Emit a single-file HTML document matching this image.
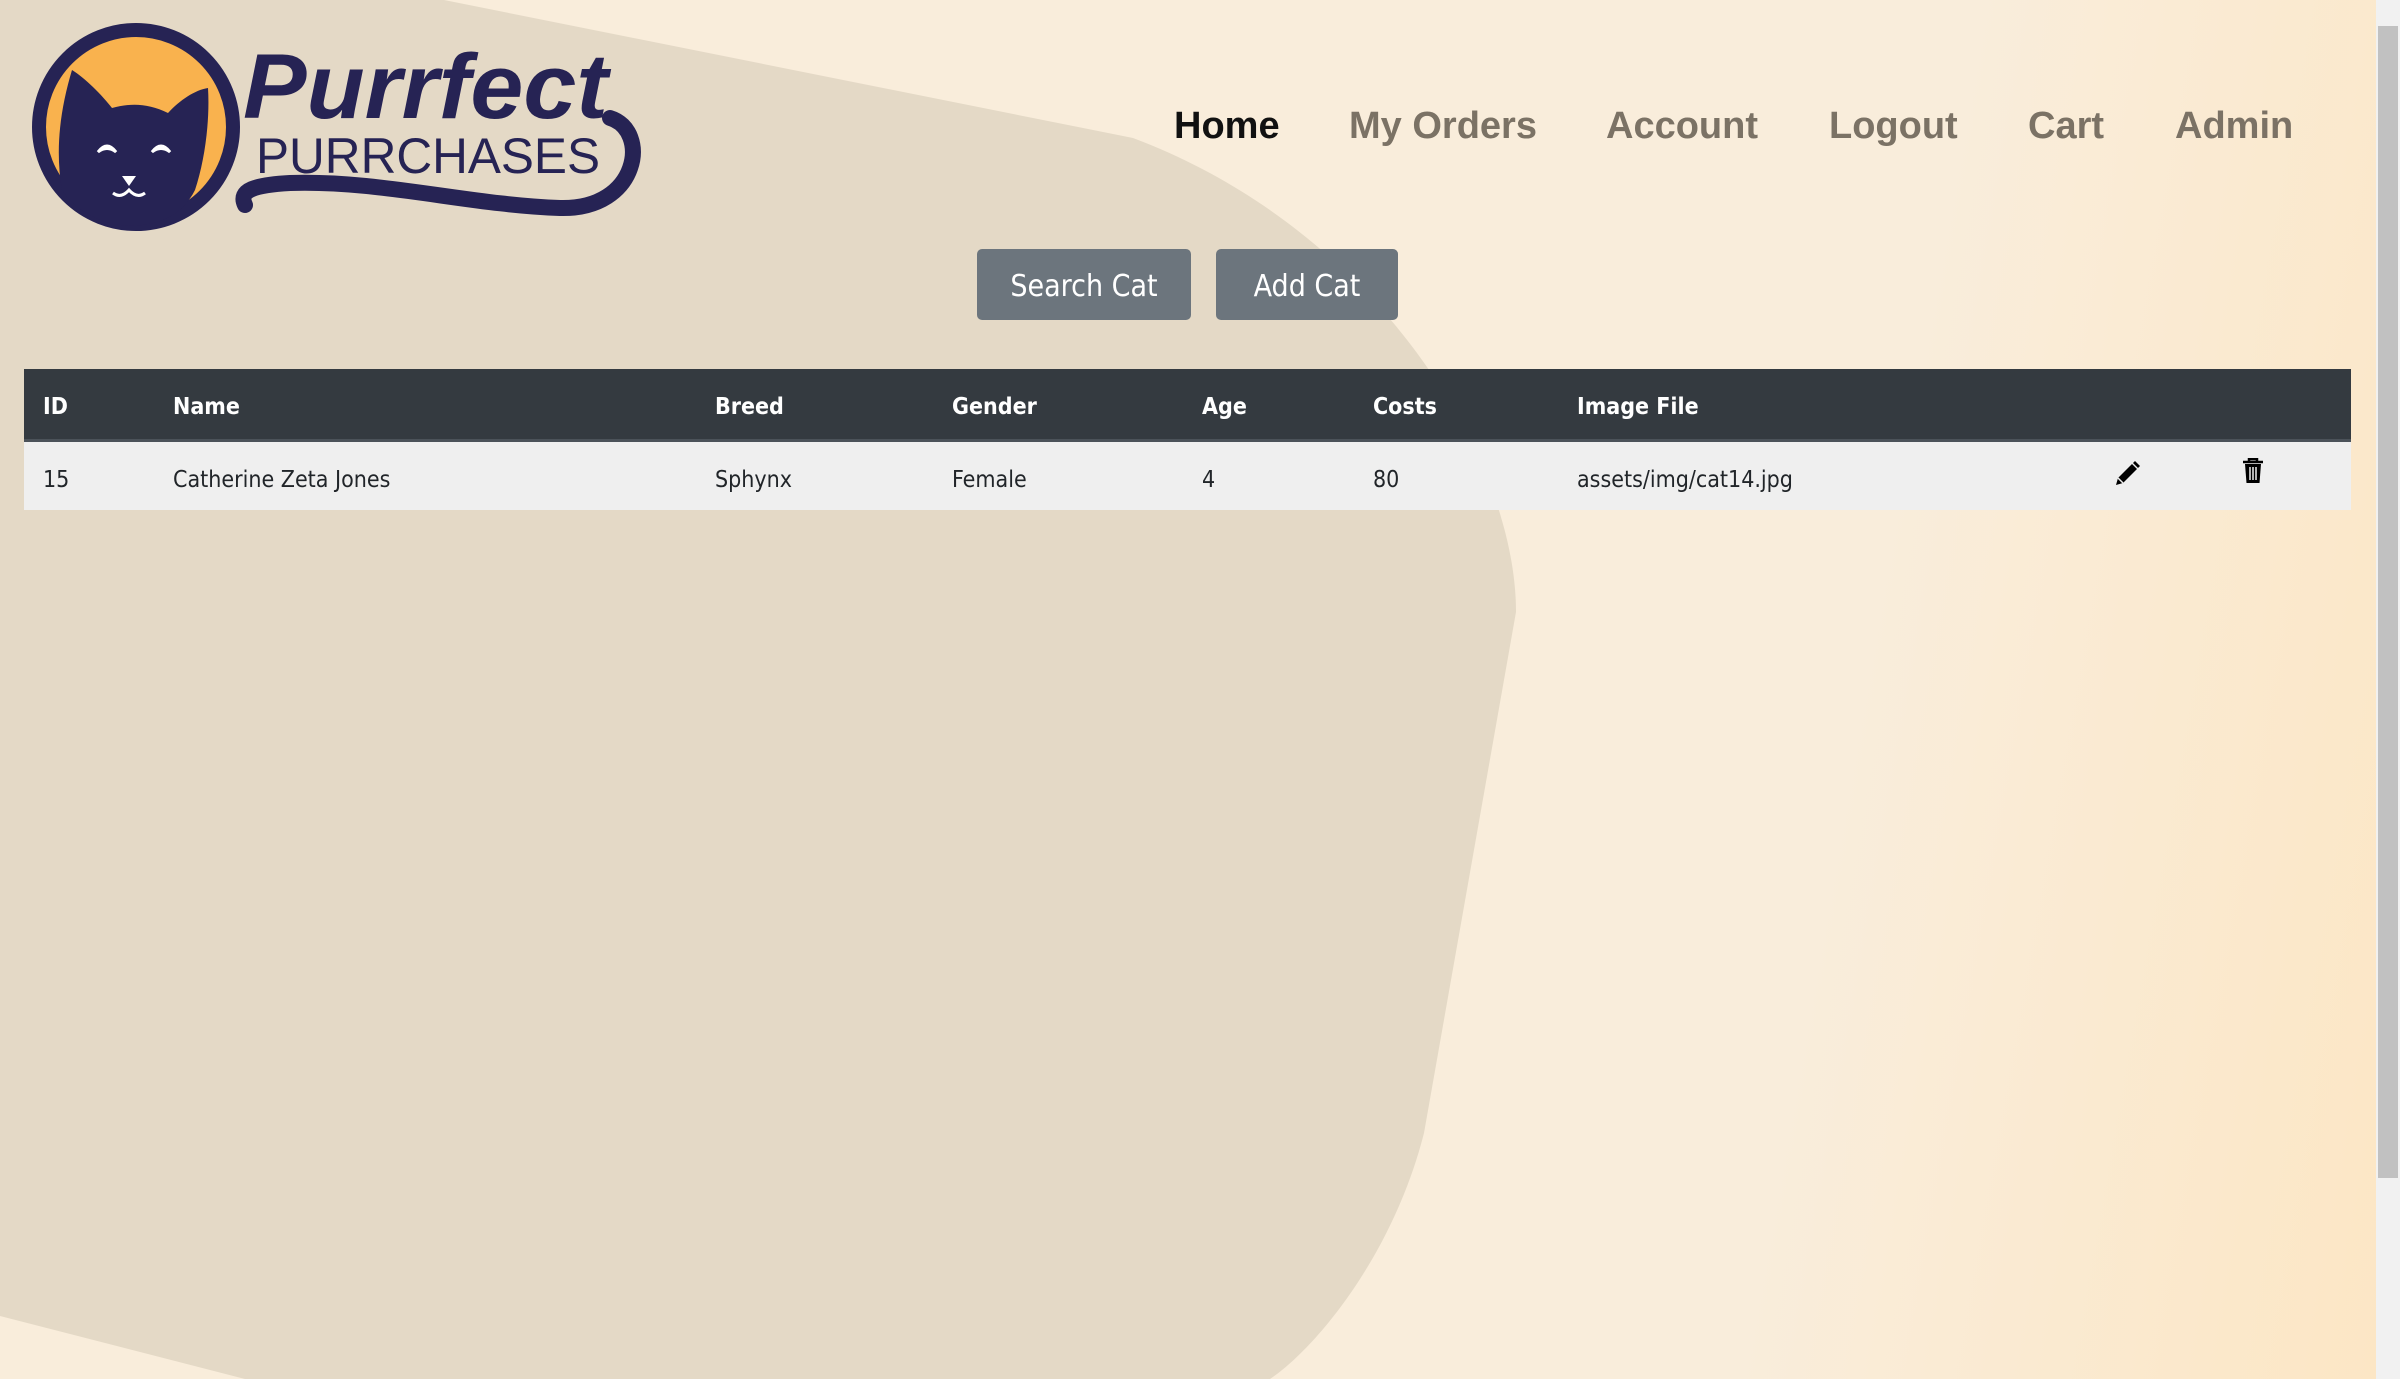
<!DOCTYPE html>
<html><head><meta charset="utf-8"><style>
html,body{margin:0;padding:0}
body{width:2400px;height:1379px;overflow:hidden;position:relative;background:linear-gradient(100deg,#f9eddb 0%,#f9eddb 75%,#fce6c4 100%);font-family:"Liberation Sans",sans-serif}
.bg{position:absolute;left:0;top:0}
.nav{position:absolute;top:105px;font:bold 38px "Liberation Sans",sans-serif;color:#7b7265}
.btn{position:absolute;top:249px;height:71px;background:#6c757d;color:#fff;border-radius:5px;font:30px "DejaVu Sans Condensed","Liberation Sans",sans-serif;line-height:75px;text-align:center}
.tbl{position:absolute;left:24px;top:369px;width:2327px}
.hd{height:70px;background:#343a40;border-bottom:3px solid #4b5259;position:relative;color:#fff;font:bold 23px "DejaVu Sans Condensed","Liberation Sans",sans-serif}
.rw{height:68px;background:#efefef;position:relative;color:#212529;font:23px "DejaVu Sans Condensed","Liberation Sans",sans-serif}
.hd span,.rw span{position:absolute;top:3px;line-height:70px}
.sb{position:absolute;right:0;top:0;width:24px;height:1379px;background:#f1f1f1}
.th{position:absolute;right:2px;top:26px;width:20px;height:1152px;background:#c1c1c1}
</style></head><body>
<svg class="bg" width="2376" height="1379"><path d="M0,0 L444,0 L1133,138 C1378,230 1516,459 1516,612 L1424,1133 C1393,1255 1316,1348 1270,1379 L245,1379 L0,1316 Z" fill="#e4d9c6"/></svg>
<svg style="position:absolute;left:0;top:0" width="660" height="240" viewBox="0 0 660 240">
<ellipse cx="136" cy="127" rx="97" ry="97" fill="#f9b24e" stroke="#262354" stroke-width="14"/>
<path d="M72,70 C85,78 102,95 112,108 C130,103 148,103 168,113 C180,100 195,90 208,88 C210,120 205,160 195,190 C180,220 150,228 120,225 C90,220 72,205 62,190 C55,150 60,110 72,70 Z" fill="#262354"/>
<path d="M98,152 q9,-12 18,0 q-9,-7 -18,0Z M152,152 q9,-12 18,0 q-9,-7 -18,0Z" fill="#fff" stroke="#fff" stroke-width="3"/>
<path d="M122,176 h14 l-7,10 z" fill="#fff"/>
<path d="M113,193 q8,6 16,-3 q8,9 16,3" fill="none" stroke="#fff" stroke-width="3"/>
<path d="M245,205 C238,190 255,185 290,183 C380,180 470,205 560,208 C640,210 650,130 610,118" fill="none" stroke="#262354" stroke-width="16" stroke-linecap="round"/>
<text x="243" y="118" font-family="'Liberation Sans',sans-serif" font-weight="bold" font-style="italic" font-size="92" fill="#262354" textLength="365" lengthAdjust="spacingAndGlyphs">Purrfect</text>
<text x="256" y="173" font-family="'Liberation Sans',sans-serif" font-size="50" fill="#262354" textLength="344" lengthAdjust="spacingAndGlyphs">PURRCHASES</text>
</svg>
<div class="nav" style="left:1174px;color:#111">Home</div>
<div class="nav" style="left:1349px">My Orders</div>
<div class="nav" style="left:1606px">Account</div>
<div class="nav" style="left:1829px">Logout</div>
<div class="nav" style="left:2028px">Cart</div>
<div class="nav" style="left:2175px">Admin</div>
<div class="btn" style="left:977px;width:214px">Search Cat</div>
<div class="btn" style="left:1216px;width:182px">Add Cat</div>
<div class="tbl">
<div class="hd"><span style="left:19px">ID</span><span style="left:149px">Name</span><span style="left:691px">Breed</span><span style="left:928px">Gender</span><span style="left:1178px">Age</span><span style="left:1349px">Costs</span><span style="left:1553px">Image File</span></div>
<div class="rw"><span style="left:19px">15</span><span style="left:149px">Catherine Zeta Jones</span><span style="left:691px">Sphynx</span><span style="left:928px">Female</span><span style="left:1178px">4</span><span style="left:1349px">80</span><span style="left:1553px">assets/img/cat14.jpg</span>
<svg style="position:absolute;left:2090px;top:18px" width="26" height="26" viewBox="0 0 26 26"><path d="M2,25 L4,18 L18,4 L23,9 L9,23 Z" fill="#000"/><path d="M19,3 L21,1 L26,6 L24,8 Z" fill="#000"/><path d="M4,18 L9,23" stroke="#efefef" stroke-width="1.5"/></svg>
<svg style="position:absolute;left:2218px;top:16px" width="22" height="26" viewBox="0 0 22 26"><path d="M7,4 V1 H15 V4 M1,4 H21" stroke="#000" stroke-width="2.5" fill="none"/><path d="M3,6 H19 L17.5,25 H4.5 Z" fill="#000"/><path d="M8,9 V22 M11,9 V22 M14,9 V22" stroke="#efefef" stroke-width="1.5"/></svg>
</div>
</div>
<div class="sb"><div class="th"></div></div>
</body></html>
